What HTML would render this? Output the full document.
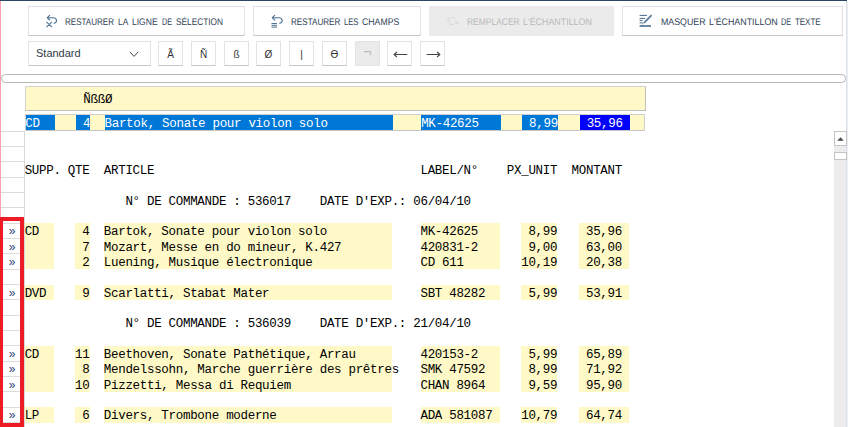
<!DOCTYPE html>
<html lang="fr"><head><meta charset="utf-8"><title>Échantillon de texte</title>
<style>
html,body{margin:0;padding:0;background:#fff;}
body{width:850px;height:427px;position:relative;overflow:hidden;font-family:"Liberation Sans",sans-serif;}
.abs{position:absolute;}
.btn{position:absolute;top:6px;height:28px;border:1px solid #e2e2e2;border-bottom-color:#c8c8c8;background:#fff;box-sizing:content-box;}
.btn .t{position:absolute;top:2px;text-rendering:geometricPrecision;line-height:28px;font-size:9.6px;color:#2f4256;white-space:nowrap;transform-origin:0 50%;}
.btn.dis{background:#ebebeb;border-color:#ebebeb;}
.btn.dis .t{color:#b9b9b9;}
.sb{position:absolute;top:41px;width:23px;height:23px;border:1px solid #e2e2e2;border-bottom-color:#c8c8c8;background:#fff;text-align:center;line-height:26px;font-size:10px;color:#333;}
.sb.dis{background:#ebebeb;border-color:#e4e4e4;color:#bdbdbd;}
.mono{font-family:"Liberation Mono","DejaVu Sans Mono",monospace;font-size:12.5px;letter-spacing:-0.305px;white-space:pre;color:#000;}
.row{position:absolute;left:24.65px;height:15.333px;line-height:15.333px;}
.y{position:absolute;background:#fff9c8;}
.gl{position:absolute;left:1px;width:24px;height:1px;background:#dcdcdc;}
.ch{position:absolute;left:4.1px;width:16px;text-align:center;font-size:12px;color:#2d4572;font-family:"Liberation Sans",sans-serif;}
</style></head><body>

<div class="abs" style="left:0;top:0;width:847px;height:1.3px;background:#2b4763"></div>
<div class="abs" style="left:0;top:1px;width:1px;height:426px;background:#ff9fb4"></div>
<div class="abs" style="left:846px;top:1px;width:1px;height:426px;background:#dde2ea"></div><div class="abs" style="left:847px;top:1px;width:1px;height:426px;background:#ebeff4"></div>
<div class="btn" style="left:28.0px;width:215.0px"><svg class="abs" style="left:16px;top:7px" width="16" height="16" viewBox="0 0 16 16" fill="none" stroke="#4a7192" stroke-width="1.12" stroke-linecap="round" stroke-linejoin="round"><path d="M4.7 1.4 L2.3 3.7 L4.7 6.0"/><path d="M2.5 3.7 H8.7 A2.75 2.75 0 0 1 9.9 8.95 L9.1 9.35"/><path d="M1.7 8.1 L6.7 12.8 M6.7 8.1 L1.7 12.8" stroke-width="1.05"/></svg><span class="t" style="left:36.40px;transform:scaleX(0.8376)">RESTAURER</span> <span class="t" style="left:89.40px;transform:scaleX(0.8718)">LA</span> <span class="t" style="left:103.40px;transform:scaleX(0.8889)">LIGNE</span> <span class="t" style="left:133.00px;transform:scaleX(0.7519)">DE</span> <span class="t" style="left:147.00px;transform:scaleX(0.8640)">SÉLECTION</span></div>
<div class="btn" style="left:253.0px;width:166.0px"><svg class="abs" style="left:16px;top:7px" width="16" height="16" viewBox="0 0 16 16" fill="none" stroke="#4a7192" stroke-width="1.12" stroke-linecap="round" stroke-linejoin="round"><path d="M4.7 1.4 L2.3 3.7 L4.7 6.0"/><path d="M2.5 3.7 H9.4 A2.75 2.75 0 0 1 10.6 8.95 L9.8 9.35"/><path d="M1.5 9.5 H7 M1.5 11.3 H7 M1.5 13.1 H7" stroke-width="1" stroke-linecap="butt"/></svg><span class="t" style="left:36.90px;transform:scaleX(0.8444)">RESTAURER</span> <span class="t" style="left:90.00px;transform:scaleX(0.7956)">LES</span> <span class="t" style="left:108.00px;transform:scaleX(0.9075)">CHAMPS</span></div>
<div class="btn dis" style="left:429.0px;width:183.0px"><svg class="abs" style="left:14.6px;top:7px" width="16" height="16" viewBox="0 0 16 16" fill="none" stroke="#d9d9d9" stroke-width="1"><path d="M2 4.5 H5 M2 6.5 H5 M6.5 3.5 Q9 2.5 10.5 5 M10 7.5 H14 M10 9.5 H14 M4.5 8 V10.5 H8.5"/></svg><span class="t" style="left:37.40px;transform:scaleX(0.8827)">REMPLACER</span> <span class="t" style="left:93.40px;transform:scaleX(0.9261)">L'ÉCHANTILLON</span></div>
<div class="btn" style="left:622.0px;width:219.0px"><svg class="abs" style="left:15px;top:6px" width="16" height="16" viewBox="0 0 16 16" fill="none" stroke="#446b8c" stroke-width="1"><path d="M1.6 2.4 H9 M1.6 5.4 H7 M1.6 7.4 H4.5 M1.6 9.8 H4.5"/><path d="M1.6 13 H13" stroke-width="1.6"/><path d="M13.6 2.2 L6 9.8" stroke-width="1.9" stroke="#5d7f9c"/><path d="M5.4 10 L4.2 11.2" stroke-width="1"/></svg><span class="t" style="left:37.50px;transform:scaleX(0.9175)">MASQUER</span> <span class="t" style="left:85.60px;transform:scaleX(0.9247)">L'ÉCHANTILLON</span> <span class="t" style="left:158.40px;transform:scaleX(0.7519)">DE</span> <span class="t" style="left:172.00px;transform:scaleX(0.8252)">TEXTE</span></div>
<div class="abs" style="left:28px;top:41px;width:121px;height:23px;border:1px solid #e2e2e2;border-bottom-color:#c8c8c8;background:#fff"><span class="abs" id="std" style="left:7px;top:0px;line-height:22px;font-size:11.5px;color:#2f3a46;transform-origin:0 50%;transform:scaleX(0.955)">Standard</span><svg class="abs" style="left:100.3px;top:8.5px" width="10" height="7" viewBox="0 0 10 7" fill="none" stroke="#444" stroke-width="1"><path d="M0.8 0.8 L5 5.4 L9.2 0.8"/></svg></div>
<div class="sb" style="left:158.0px">Ã</div>
<div class="sb" style="left:191.0px">Ñ</div>
<div class="sb" style="left:224.0px">ß</div>
<div class="sb" style="left:256.0px">Ø</div>
<div class="sb" style="left:289.0px">|</div>
<div class="sb" style="left:322.0px">ϴ</div>
<div class="sb dis" style="left:355.0px;font-size:15px;line-height:19px">¬</div>
<div class="sb" style="left:387.0px"><svg class="abs" style="left:4.5px;top:8px" width="15" height="9" viewBox="0 0 15 9" fill="none" stroke="#444" stroke-width="1.2"><path d="M1 4.5 H14.3 M3.9 1.9 L1.2 4.5 L3.9 7.1"/></svg></div>
<div class="sb" style="left:420.0px"><svg class="abs" style="left:4.5px;top:8px" width="15" height="9" viewBox="0 0 15 9" fill="none" stroke="#444" stroke-width="1.2"><path d="M0.7 4.5 H14 M11.1 1.9 L13.8 4.5 L11.1 7.1"/></svg></div>
<div class="abs" style="left:1px;top:74px;width:843px;height:7px;border:1px solid #b6b6b6;border-radius:5px;background:#fff"></div>
<div class="abs" style="left:25px;top:86px;width:619px;height:23px;border:1px solid #d2d2d2;border-right-color:#c0c0c0;border-bottom-color:#c0c0c0;background:#fff9c8"></div>
<div class="abs mono" style="left:83.31px;top:93.2px;height:15.333px;line-height:15.333px">ÑßßØ</div>
<div class="abs" style="left:25px;top:114px;width:620px;height:17px;background:#fff9c8;border:1px solid #d0d0d0;border-bottom-color:#c6c6c6;box-sizing:border-box"></div>
<div class="abs" style="left:25.75px;top:115px;width:28.78px;height:15px;background:#0078d7"></div>
<div class="abs" style="left:76.12px;top:115px;width:14.39px;height:15px;background:#0078d7"></div>
<div class="abs" style="left:104.90px;top:115px;width:287.80px;height:15px;background:#0078d7"></div>
<div class="abs" style="left:421.48px;top:115px;width:79.15px;height:15px;background:#0078d7"></div>
<div class="abs" style="left:522.21px;top:115px;width:35.98px;height:15px;background:#0078d7"></div>
<div class="abs" style="left:579.76px;top:115px;width:50.37px;height:15px;background:#0202fa"></div>
<div class="abs mono" style="left:25.35px;top:117px;height:15px;line-height:15px;color:#fff">CD      4  Bartok, Sonate pour violon solo             MK-42625       8,99    35,96</div>
<div class="gl" style="top:130.70px"></div>
<div class="gl" style="top:146.03px"></div>
<div class="gl" style="top:161.37px"></div>
<div class="gl" style="top:176.70px"></div>
<div class="gl" style="top:192.03px"></div>
<div class="gl" style="top:207.37px"></div>
<div class="gl" style="top:222.70px"></div>
<div class="gl" style="top:238.03px"></div>
<div class="gl" style="top:253.37px"></div>
<div class="gl" style="top:268.70px"></div>
<div class="gl" style="top:284.03px"></div>
<div class="gl" style="top:299.37px"></div>
<div class="gl" style="top:314.70px"></div>
<div class="gl" style="top:330.03px"></div>
<div class="gl" style="top:345.37px"></div>
<div class="gl" style="top:360.70px"></div>
<div class="gl" style="top:376.03px"></div>
<div class="gl" style="top:391.37px"></div>
<div class="gl" style="top:406.70px"></div>
<div class="gl" style="top:422.03px"></div>
<div class="abs" style="left:24px;top:131px;width:1px;height:296px;background:#d8d8d8"></div>
<div class="y" style="left:24.85px;top:223.20px;width:28.78px;height:15.33px"></div>
<div class="y" style="left:75.22px;top:223.20px;width:14.39px;height:15.33px"></div>
<div class="y" style="left:104.00px;top:223.20px;width:287.80px;height:15.33px"></div>
<div class="y" style="left:420.58px;top:223.20px;width:79.15px;height:15.33px"></div>
<div class="y" style="left:521.31px;top:223.20px;width:35.98px;height:15.33px"></div>
<div class="y" style="left:578.87px;top:223.20px;width:50.37px;height:15.33px"></div>
<div class="y" style="left:24.85px;top:238.53px;width:28.78px;height:15.33px"></div>
<div class="y" style="left:75.22px;top:238.53px;width:14.39px;height:15.33px"></div>
<div class="y" style="left:104.00px;top:238.53px;width:287.80px;height:15.33px"></div>
<div class="y" style="left:420.58px;top:238.53px;width:79.15px;height:15.33px"></div>
<div class="y" style="left:521.31px;top:238.53px;width:35.98px;height:15.33px"></div>
<div class="y" style="left:578.87px;top:238.53px;width:50.37px;height:15.33px"></div>
<div class="y" style="left:24.85px;top:253.87px;width:28.78px;height:15.33px"></div>
<div class="y" style="left:75.22px;top:253.87px;width:14.39px;height:15.33px"></div>
<div class="y" style="left:104.00px;top:253.87px;width:287.80px;height:15.33px"></div>
<div class="y" style="left:420.58px;top:253.87px;width:79.15px;height:15.33px"></div>
<div class="y" style="left:521.31px;top:253.87px;width:35.98px;height:15.33px"></div>
<div class="y" style="left:578.87px;top:253.87px;width:50.37px;height:15.33px"></div>
<div class="y" style="left:24.85px;top:284.53px;width:28.78px;height:15.33px"></div>
<div class="y" style="left:75.22px;top:284.53px;width:14.39px;height:15.33px"></div>
<div class="y" style="left:104.00px;top:284.53px;width:287.80px;height:15.33px"></div>
<div class="y" style="left:420.58px;top:284.53px;width:79.15px;height:15.33px"></div>
<div class="y" style="left:521.31px;top:284.53px;width:35.98px;height:15.33px"></div>
<div class="y" style="left:578.87px;top:284.53px;width:50.37px;height:15.33px"></div>
<div class="y" style="left:24.85px;top:345.87px;width:28.78px;height:15.33px"></div>
<div class="y" style="left:75.22px;top:345.87px;width:14.39px;height:15.33px"></div>
<div class="y" style="left:104.00px;top:345.87px;width:287.80px;height:15.33px"></div>
<div class="y" style="left:420.58px;top:345.87px;width:79.15px;height:15.33px"></div>
<div class="y" style="left:521.31px;top:345.87px;width:35.98px;height:15.33px"></div>
<div class="y" style="left:578.87px;top:345.87px;width:50.37px;height:15.33px"></div>
<div class="y" style="left:24.85px;top:361.20px;width:28.78px;height:15.33px"></div>
<div class="y" style="left:75.22px;top:361.20px;width:14.39px;height:15.33px"></div>
<div class="y" style="left:104.00px;top:361.20px;width:287.80px;height:15.33px"></div>
<div class="y" style="left:420.58px;top:361.20px;width:79.15px;height:15.33px"></div>
<div class="y" style="left:521.31px;top:361.20px;width:35.98px;height:15.33px"></div>
<div class="y" style="left:578.87px;top:361.20px;width:50.37px;height:15.33px"></div>
<div class="y" style="left:24.85px;top:376.53px;width:28.78px;height:15.33px"></div>
<div class="y" style="left:75.22px;top:376.53px;width:14.39px;height:15.33px"></div>
<div class="y" style="left:104.00px;top:376.53px;width:287.80px;height:15.33px"></div>
<div class="y" style="left:420.58px;top:376.53px;width:79.15px;height:15.33px"></div>
<div class="y" style="left:521.31px;top:376.53px;width:35.98px;height:15.33px"></div>
<div class="y" style="left:578.87px;top:376.53px;width:50.37px;height:15.33px"></div>
<div class="y" style="left:24.85px;top:407.20px;width:28.78px;height:15.33px"></div>
<div class="y" style="left:75.22px;top:407.20px;width:14.39px;height:15.33px"></div>
<div class="y" style="left:104.00px;top:407.20px;width:287.80px;height:15.33px"></div>
<div class="y" style="left:420.58px;top:407.20px;width:79.15px;height:15.33px"></div>
<div class="y" style="left:521.31px;top:407.20px;width:35.98px;height:15.33px"></div>
<div class="y" style="left:578.87px;top:407.20px;width:50.37px;height:15.33px"></div>
<div class="row mono" style="top:163.87px">SUPP. QTE  ARTICLE                                     LABEL/N°    PX_UNIT  MONTANT</div>
<div class="row mono" style="top:194.53px">              N° DE COMMANDE : 536017    DATE D'EXP.: 06/04/10</div>
<div class="row mono" style="top:225.20px">CD      4  Bartok, Sonate pour violon solo             MK-42625       8,99    35,96</div>
<div class="row mono" style="top:240.53px">        7  Mozart, Messe en do mineur, K.427           420831-2       9,00    63,00</div>
<div class="row mono" style="top:255.87px">        2  Luening, Musique électronique               CD 611        10,19    20,38</div>
<div class="row mono" style="top:286.53px">DVD     9  Scarlatti, Stabat Mater                     SBT 48282      5,99    53,91</div>
<div class="row mono" style="top:317.20px">              N° DE COMMANDE : 536039    DATE D'EXP.: 21/04/10</div>
<div class="row mono" style="top:347.87px">CD     11  Beethoven, Sonate Pathétique, Arrau         420153-2       5,99    65,89</div>
<div class="row mono" style="top:363.20px">        8  Mendelssohn, Marche guerrière des prêtres   SMK 47592      8,99    71,92</div>
<div class="row mono" style="top:378.53px">       10  Pizzetti, Messa di Requiem                  CHAN 8964      9,59    95,90</div>
<div class="row mono" style="top:409.20px">LP      6  Divers, Trombone moderne                    ADA 581087    10,79    64,74</div>
<div class="ch" style="top:224.40px;height:15.33px;line-height:15.33px">»</div>
<div class="ch" style="top:239.73px;height:15.33px;line-height:15.33px">»</div>
<div class="ch" style="top:255.07px;height:15.33px;line-height:15.33px">»</div>
<div class="ch" style="top:285.73px;height:15.33px;line-height:15.33px">»</div>
<div class="ch" style="top:347.07px;height:15.33px;line-height:15.33px">»</div>
<div class="ch" style="top:362.40px;height:15.33px;line-height:15.33px">»</div>
<div class="ch" style="top:377.73px;height:15.33px;line-height:15.33px">»</div>
<div class="ch" style="top:408.40px;height:15.33px;line-height:15.33px">»</div>
<div class="abs" style="left:834px;top:131px;width:12px;height:296px;background:#ececec"></div>
<div class="abs" style="left:834px;top:131.3px;width:10.7px;height:12.4px;border:1px solid #c4c4c4;background:#fff"><svg class="abs" style="left:2.2px;top:4.3px" width="7" height="4" viewBox="0 0 7 4"><path d="M0.2 3.8 L3.5 0.2 L6.8 3.8 Z" fill="#4a4a4a"/></svg></div>
<div class="abs" style="left:834px;top:152.3px;width:10.7px;height:5.4px;border:1px solid #c4c4c4;background:#fff"></div>
<div class="abs" style="left:-1px;top:217px;width:25px;height:210px;border:4px solid #ed1c24;box-sizing:border-box"></div>
</body></html>
